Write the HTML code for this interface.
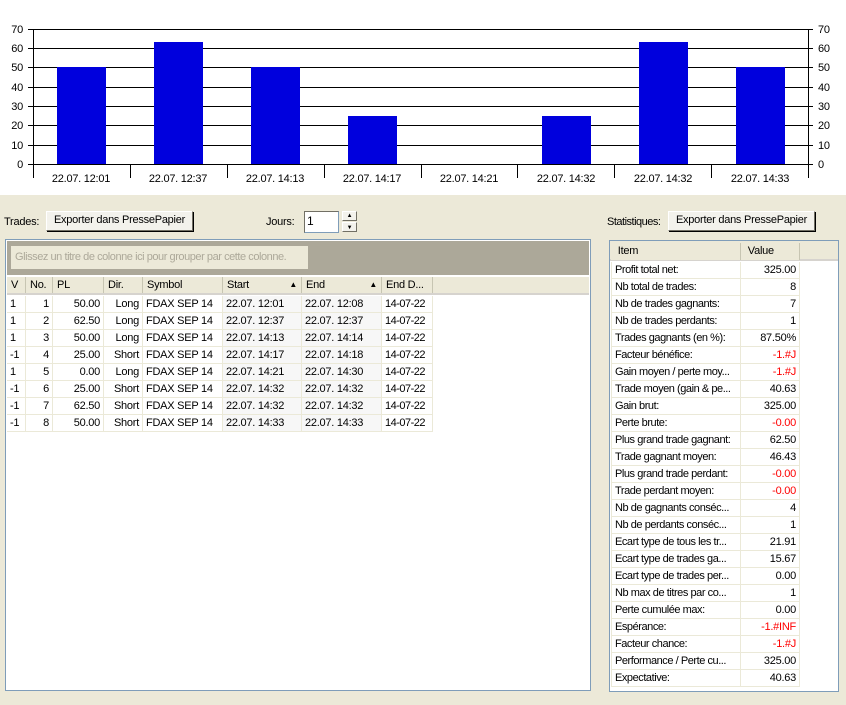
<!DOCTYPE html>
<html><head><meta charset="utf-8">
<style>
*{margin:0;padding:0;box-sizing:border-box}
body{width:846px;height:705px;background:#ECE9D8;font-family:"Liberation Sans",Arial,sans-serif;font-size:11px;letter-spacing:-0.25px;color:#000;position:relative;overflow:hidden}
.a{position:absolute;white-space:nowrap}
.btn{position:absolute;background:#F3F2EC;border:1px solid #fff;border-right-color:#716F64;border-bottom-color:#716F64;box-shadow:1px 1px 0 #000;text-align:center;line-height:17px;font-size:11px;white-space:nowrap;overflow:hidden}
.hd{position:absolute;height:17px;line-height:16px;border-right:1px solid #C7C5B2;padding-left:4px;background:#ECE9D8;font-size:11px;white-space:nowrap;overflow:hidden}
.c{position:absolute;height:17px;line-height:16px;border-right:1px solid #EBE9D8;border-bottom:1px solid #EBE9D8;padding:0 3px;overflow:hidden;font-size:11px;white-space:nowrap;text-overflow:ellipsis}
.r{text-align:right}
.red{color:#f00}
</style></head><body>
<div class="a" style="left:0;top:0;width:846px;height:195px;background:#fff"></div>
<svg class="a" style="left:0;top:0" width="846" height="195" font-family="Liberation Sans, Arial, sans-serif" font-size="11">
<g stroke="#000" stroke-width="1">
<line x1="28" y1="29.5" x2="813" y2="29.5"/><line x1="28" y1="48.5" x2="813" y2="48.5"/><line x1="28" y1="67.5" x2="813" y2="67.5"/><line x1="28" y1="87.5" x2="813" y2="87.5"/><line x1="28" y1="106.5" x2="813" y2="106.5"/><line x1="28" y1="125.5" x2="813" y2="125.5"/><line x1="28" y1="145.5" x2="813" y2="145.5"/><line x1="28" y1="164.5" x2="813" y2="164.5"/>
<line x1="33.5" y1="29" x2="33.5" y2="178"/><line x1="808.5" y1="29" x2="808.5" y2="178"/>
<line x1="130.5" y1="164" x2="130.5" y2="178"/><line x1="227.5" y1="164" x2="227.5" y2="178"/><line x1="324.5" y1="164" x2="324.5" y2="178"/><line x1="421.5" y1="164" x2="421.5" y2="178"/><line x1="517.5" y1="164" x2="517.5" y2="178"/><line x1="614.5" y1="164" x2="614.5" y2="178"/><line x1="711.5" y1="164" x2="711.5" y2="178"/>
</g>
<g fill="#0000DD">
<rect x="57" y="67" width="49" height="97"/><rect x="154" y="42" width="49" height="122"/><rect x="251" y="67" width="49" height="97"/><rect x="348" y="116" width="49" height="48"/><rect x="542" y="116" width="49" height="48"/><rect x="639" y="42" width="49" height="122"/><rect x="736" y="67" width="49" height="97"/>
</g>
<g text-anchor="end"><text x="23" y="33">70</text><text x="23" y="52">60</text><text x="23" y="71">50</text><text x="23" y="91">40</text><text x="23" y="110">30</text><text x="23" y="129">20</text><text x="23" y="149">10</text><text x="23" y="168">0</text></g>
<g><text x="818" y="33">70</text><text x="818" y="52">60</text><text x="818" y="71">50</text><text x="818" y="91">40</text><text x="818" y="110">30</text><text x="818" y="129">20</text><text x="818" y="149">10</text><text x="818" y="168">0</text></g>
<g text-anchor="middle"><text x="81" y="182">22.07. 12:01</text><text x="178" y="182">22.07. 12:37</text><text x="275" y="182">22.07. 14:13</text><text x="372" y="182">22.07. 14:17</text><text x="469" y="182">22.07. 14:21</text><text x="566" y="182">22.07. 14:32</text><text x="663" y="182">22.07. 14:32</text><text x="760" y="182">22.07. 14:33</text></g>
</svg>

<div class="a" style="left:4px;top:216px">Trades:</div>
<div class="btn" style="left:46px;top:211px;width:147px;height:20px">Exporter dans PressePapier</div>
<div class="a" style="left:266px;top:216px">Jours:</div>
<div class="a" style="left:304px;top:211px;width:35px;height:22px;background:#fff;border:1px solid #7F9DB9;border-top-color:#716F64;border-left-color:#716F64;padding-left:2px;line-height:18px;font-size:12px">1</div>
<div class="btn" style="left:342px;top:211px;width:15px;height:10px;line-height:8px;font-size:6px;box-shadow:none">▲</div>
<div class="btn" style="left:342px;top:222px;width:15px;height:10px;line-height:10px;font-size:6px;box-shadow:none">▼</div>

<div class="a" style="left:607px;top:216px;letter-spacing:-0.5px">Statistiques:</div>
<div class="btn" style="left:668px;top:211px;width:147px;height:20px">Exporter dans PressePapier</div>

<!-- trades grid -->
<div class="a" style="left:5px;top:239px;width:586px;height:452px;background:#fff;border:1px solid #7F9DB9"></div>
<div class="a" style="left:7px;top:241px;width:582px;height:34px;background:#ACA899"></div>
<div class="a" style="left:11px;top:246px;width:297px;height:23px;background:#ECE9D8;color:#ACA899;line-height:22px;padding-left:4px;letter-spacing:-0.45px;overflow:hidden">Glissez un titre de colonne ici pour grouper par cette colonne.</div>
<div class="hd" style="left:7px;top:277px;width:19px">V</div>
<div class="hd" style="left:26px;top:277px;width:27px">No.</div>
<div class="hd" style="left:53px;top:277px;width:51px">PL</div>
<div class="hd" style="left:104px;top:277px;width:39px">Dir.</div>
<div class="hd" style="left:143px;top:277px;width:80px">Symbol</div>
<div class="hd" style="left:223px;top:277px;width:79px">Start<span style="position:absolute;right:4px;font-size:8px">▲</span></div>
<div class="hd" style="left:302px;top:277px;width:80px">End<span style="position:absolute;right:4px;font-size:8px">▲</span></div>
<div class="hd" style="left:382px;top:277px;width:51px">End D...</div>
<div class="a" style="left:433px;top:277px;width:156px;height:17px;background:#ECE9D8"></div>
<div class="a" style="left:7px;top:293px;width:582px;height:2px;background:#D6D3CE"></div>
<div id="rows"></div>

<!-- stats -->
<div class="a" style="left:609px;top:240px;width:230px;height:452px;background:#fff;border:1px solid #7F9DB9"></div>
<div class="a" style="left:610px;top:241px;width:228px;height:20px;background:#ECE9D8;border-bottom:2px solid #D6D3CE"></div>
<div class="hd" style="left:611px;top:243px;width:130px">&nbsp;Item</div>
<div class="hd" style="left:741px;top:243px;width:59px">&nbsp;Value</div>
<div id="stats"></div>

<script>
var rows=[["1","1","50.00","Long","12:01","12:08"],["1","2","62.50","Long","12:37","12:37"],["1","3","50.00","Long","14:13","14:14"],["-1","4","25.00","Short","14:17","14:18"],["1","5","0.00","Long","14:21","14:30"],["-1","6","25.00","Short","14:32","14:32"],["-1","7","62.50","Short","14:32","14:32"],["-1","8","50.00","Short","14:33","14:33"]];
var h="";
rows.forEach(function(r,i){var y=296+i*17;
h+='<div class="c" style="left:7px;top:'+y+'px;width:19px">'+r[0]+'</div>';
h+='<div class="c r" style="left:26px;top:'+y+'px;width:27px">'+r[1]+'</div>';
h+='<div class="c r" style="left:53px;top:'+y+'px;width:51px">'+r[2]+'</div>';
h+='<div class="c r" style="left:104px;top:'+y+'px;width:39px">'+r[3]+'</div>';
h+='<div class="c" style="left:143px;top:'+y+'px;width:80px">FDAX SEP 14</div>';
h+='<div class="c" style="left:223px;top:'+y+'px;width:79px;background:#F7F7F7">22.07. '+r[4]+'</div>';
h+='<div class="c" style="left:302px;top:'+y+'px;width:80px;background:#F7F7F7">22.07. '+r[5]+'</div>';
h+='<div class="c" style="left:382px;top:'+y+'px;width:51px;letter-spacing:-0.5px">14-07-22</div>';});
document.getElementById("rows").innerHTML=h;
var st=[["Profit total net:","325.00"],["Nb total de trades:","8"],["Nb de trades gagnants:","7"],["Nb de trades perdants:","1"],["Trades gagnants (en %):","87.50%"],["Facteur bénéfice:","-1.#J",1],["Gain moyen / perte moy...","-1.#J",1],["Trade moyen (gain &amp; pe...","40.63"],["Gain brut:","325.00"],["Perte brute:","-0.00",1],["Plus grand trade gagnant:","62.50"],["Trade gagnant moyen:","46.43"],["Plus grand trade perdant:","-0.00",1],["Trade perdant moyen:","-0.00",1],["Nb de gagnants conséc...","4"],["Nb de perdants conséc...","1"],["Ecart type de tous les tr...","21.91"],["Ecart type de trades ga...","15.67"],["Ecart type de trades per...","0.00"],["Nb max de titres par co...","1"],["Perte cumulée max:","0.00"],["Espérance:","-1.#INF",1],["Facteur chance:","-1.#J",1],["Performance / Perte cu...","325.00"],["Expectative:","40.63"]];
h="";
st.forEach(function(s,i){var y=262+i*17;
h+='<div class="c" style="left:611px;top:'+y+'px;width:130px;border-left:1px solid #EBE9D8;letter-spacing:-0.45px;text-overflow:clip">'+s[0]+'</div>';
h+='<div class="c r'+(s[2]?' red':'')+'" style="left:741px;top:'+y+'px;width:59px">'+s[1]+'</div>';});
document.getElementById("stats").innerHTML=h;
</script>
</body></html>
